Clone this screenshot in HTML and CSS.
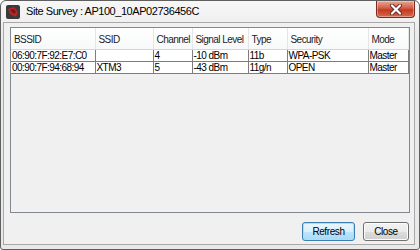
FILE: index.html
```html
<!DOCTYPE html>
<html lang="en">
<head>
  <meta charset="UTF-8">
  <title>Site Survey</title>
  <link rel="stylesheet" href="styles.css">
</head>
<body>
  <div class="window">
    <div class="titlebar">
      <svg class="app-icon" width="16" height="16" viewBox="0 0 16 16">
        <rect x="1" y="1" width="14" height="14" rx="2" fill="#3a3a3a"/>
        <path d="M3 5 L9 3 L13 8 L11 13 L5 10 Z" fill="#b8262a"/>
        <path d="M5 6 L9 5 L11 8 L9 10 Z" fill="#7a1216"/>
      </svg>
      <span class="title">Site Survey : AP100_10AP02736456C</span>
      <button class="close-x">
        <svg width="14" height="11" viewBox="0 0 14 11">
          <path d="M3 1.5 L11 9.5 M11 1.5 L3 9.5" stroke="#6a2b22" stroke-width="4" stroke-linecap="round"/>
          <path d="M3 1.5 L11 9.5 M11 1.5 L3 9.5" stroke="#ffffff" stroke-width="2.2" stroke-linecap="round"/>
        </svg>
      </button>
    </div>

    <div class="client">
      <div class="grid-box">
        <table class="survey">
          <colgroup>
            <col style="width:84px">
            <col style="width:58px">
            <col style="width:39px">
            <col style="width:56px">
            <col style="width:39px">
            <col style="width:81px">
            <col>
          </colgroup>
          <thead>
            <tr>
              <th>BSSID</th>
              <th>SSID</th>
              <th>Channel</th>
              <th>Signal Level</th>
              <th>Type</th>
              <th>Security</th>
              <th>Mode</th>
            </tr>
          </thead>
          <tbody>
            <tr>
              <td>06:90:7F:92:E7:C0</td>
              <td></td>
              <td>4</td>
              <td>-10 dBm</td>
              <td>11b</td>
              <td>WPA-PSK</td>
              <td>Master</td>
            </tr>
            <tr>
              <td>00:90:7F:94:68:94</td>
              <td>XTM3</td>
              <td>5</td>
              <td>-43 dBm</td>
              <td>11g/n</td>
              <td>OPEN</td>
              <td>Master</td>
            </tr>
          </tbody>
        </table>
      </div>

      <div class="actions">
        <button class="btn btn-default">Refresh</button>
        <button class="btn">Close</button>
      </div>
    </div>
  </div>
</body>
</html>
```

FILE: styles.css
```css
body, html {
  margin: 0;
  padding: 0;
  background-color: #ffffff;
  font-family: "Liberation Sans", Arial, sans-serif;
}

.window {
  width: 420px;
  height: 250px;
  box-sizing: border-box;
  border: 1px solid #5f5f5f;
  border-radius: 6px 6px 3px 3px;
  background: linear-gradient(#f7f7f7, #e9e9e9 40px, #e9e9e9);
  display: flex;
  flex-direction: column;
  overflow: hidden;
}

.titlebar {
  height: 21px;
  display: flex;
  align-items: flex-start;
  flex-shrink: 0;
}

.app-icon {
  margin: 3px 0 0 4px;
}

.title {
  margin: 4px 0 0 5px;
  font-size: 11px;
  letter-spacing: -0.45px;
  color: #000000;
}

.close-x {
  margin-left: auto;
  margin-right: 4px;
  width: 39px;
  height: 17px;
  padding: 0;
  border: 1px solid #7a2a20;
  border-top: none;
  border-radius: 0 0 4px 4px;
  background: linear-gradient(#e9a795, #d35d44 45%, #c23a22 55%, #d86a4c);
  box-shadow: inset 0 0 0 1px rgba(255, 255, 255, 0.35);
  display: flex;
  align-items: center;
  justify-content: center;
}

.client {
  flex: 1;
  margin: 0 4px 4px 2px;
  border: 1px solid #a9a9a9;
  background-color: #f0f0f0;
  display: flex;
  flex-direction: column;
  padding: 4px 4px 0 6px;
}

.grid-box {
  height: 186px;
  box-sizing: border-box;
  border: 1px solid #828790;
  background-color: #f0f0f0;
}

.survey {
  width: 100%;
  border-collapse: collapse;
  table-layout: fixed;
  font-size: 10px;
  letter-spacing: -0.55px;
  color: #000000;
}

.survey th {
  height: 20px;
  padding: 1px 0 0 3px;
  text-align: left;
  font-weight: normal;
  color: #1c1c1c;
  background: linear-gradient(#ffffff, #f7f8f9);
  border-right: 1px solid #e3e5e7;
  border-bottom: 1px solid #d5d5d5;
  white-space: nowrap;
  overflow: hidden;
}

.survey td {
  height: 11px;
  padding: 0 0 0 1px;
  line-height: 11px;
  background-color: #ffffff;
  border: 1px solid #7d7d7d;
  white-space: nowrap;
  overflow: hidden;
}

.survey td:first-child {
  border-left: none;
}

.actions {
  display: flex;
  justify-content: flex-end;
  gap: 8px;
  padding: 9px 1px 0 0;
}

.btn {
  height: 19px;
  padding: 0;
  font-family: "Liberation Sans", Arial, sans-serif;
  font-size: 10px;
  letter-spacing: -0.4px;
  color: #000000;
  border: 1px solid #707070;
  border-radius: 3px;
  background: linear-gradient(#f2f2f2, #ebebeb 50%, #dddddd 50%, #cfcfcf);
  box-shadow: inset 0 0 0 1px #fcfcfc;
  width: 46px;
}

.btn-default {
  width: 53px;
  border-color: #3c7fb1;
  background: linear-gradient(#eaf6fd, #d9f0fc 50%, #bee6fd 50%, #a7d9f5);
  box-shadow: inset 0 0 0 1px #a8e0f8;
}
```
